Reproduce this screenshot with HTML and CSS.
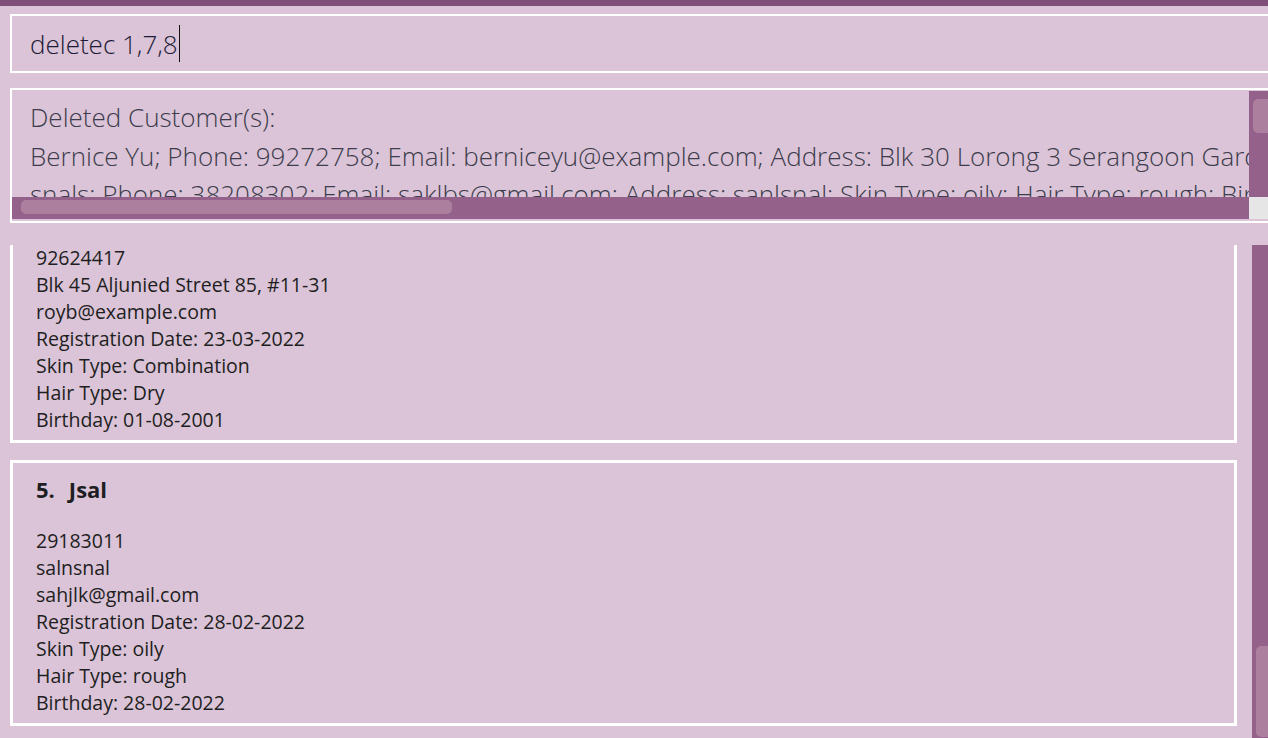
FILE: index.html
```html
<!DOCTYPE html>
<html>
<head>
<meta charset="utf-8">
<link rel="stylesheet" href="styles.css">
</head>
<body>
<div class="app">
  <div class="topbar"></div>
  <div class="command">
    <span class="command-text">deletec 1,7,8</span><span class="caret"></span>
  </div>
  <div class="result">
    <div class="result-text">
      <div class="result-line">Deleted Customer(s):</div>
      <div class="result-line">Bernice Yu; Phone: 99272758; Email: berniceyu@example.com; Address: Blk 30 Lorong 3 Serangoon Gardens, #07-18; Registration Date: 21-03-2022; Skin Type: Dry; Hair Type: Oily; Birthday: 12-06-1999</div>
      <div class="result-line">snals; Phone: 38208302; Email: saklbs@gmail.com; Address: sanlsnal; Skin Type: oily; Hair Type: rough; Birthday: 28-02-2022</div>
    </div>
    <div class="vbar"><div class="vthumb"></div></div>
    <div class="hbar"><div class="hthumb"></div></div>
    <div class="corner"></div>
  </div>
  <div class="list">
    <div class="cards">
      <div class="card first">
        <div class="card-name"><span class="card-index">4.</span><span class="card-title">Roy Balakrishnan</span></div>
        <div class="card-details">
          <div>92624417</div>
          <div>Blk 45 Aljunied Street 85, #11-31</div>
          <div>royb@example.com</div>
          <div>Registration Date: 23-03-2022</div>
          <div>Skin Type: Combination</div>
          <div>Hair Type: Dry</div>
          <div>Birthday: 01-08-2001</div>
        </div>
      </div>
      <div class="card">
        <div class="card-name"><span class="card-index">5.</span><span class="card-title">Jsal</span></div>
        <div class="card-details">
          <div>29183011</div>
          <div>salnsnal</div>
          <div>sahjlk@gmail.com</div>
          <div>Registration Date: 28-02-2022</div>
          <div>Skin Type: oily</div>
          <div>Hair Type: rough</div>
          <div>Birthday: 28-02-2022</div>
        </div>
      </div>
    </div>
    <div class="list-bar"><div class="list-thumb"></div></div>
  </div>
</div>
</body>
</html>
```

FILE: styles.css
```css
html, body {
  margin: 0;
  padding: 0;
}
body {
  background: #dbc4d7;
  font-family: "Open Sans", "Noto Sans", sans-serif;
  overflow: hidden;
  width: 1268px;
  height: 738px;
}
.app {
  display: flex;
  flex-direction: column;
  height: 738px;
}
.topbar {
  height: 6px;
  background: #7f5077;
  flex: none;
}
.command {
  flex: none;
  margin: 8px -2px 0 10px;
  border: 2px solid #ffffff;
  height: 55px;
  display: flex;
  align-items: center;
  padding-left: 18px;
}
.command-text {
  font-size: 26px;
  font-weight: 300;
  color: #1b1b36;
  white-space: pre;
}
.caret {
  width: 1px;
  height: 37px;
  background: #111;
  margin-left: 1px;
}
.result {
  flex: none;
  margin: 15px -2px 0 10px;
  border: 2px solid #ffffff;
  height: 128px;
  padding: 1px 0 2px 0;
  display: grid;
  grid-template-columns: 1fr 19px;
  grid-template-rows: 106px 22px;
}
.result-text {
  overflow: hidden;
  padding: 7px 0 0 18px;
  font-size: 26px;
  font-weight: 300;
  color: #3c3c4c;
  line-height: 38.5px;
}
.result-line {
  white-space: pre;
}
.vbar {
  background: #936189;
  display: flex;
  justify-content: flex-end;
  padding-top: 8px;
}
.vthumb {
  width: 15px;
  height: 34px;
  background: #ad7f9f;
  border-radius: 5px 0 0 5px;
}
.hbar {
  background: #936189;
  display: flex;
  align-items: center;
  padding-left: 9px;
  padding-bottom: 2px;
}
.hthumb {
  width: 431px;
  height: 14px;
  background: #ad7f9f;
  border-radius: 5px;
}
.corner {
  background: #e6e6e6;
}
.list {
  flex: 1;
  min-height: 0;
  margin-top: 22px;
  display: flex;
}
.cards {
  flex: 1;
  min-width: 0;
  overflow: hidden;
  padding: 0 15px 0 10px;
  display: flex;
  flex-direction: column;
  gap: 17px;
}
.card {
  flex: none;
  border: 3px solid #ffffff;
  padding: 10.5px 20px 7.5px 23px;
  color: #1e1e22;
}
.card.first {
  margin-top: -68px;
}
.card-name {
  font-size: 22px;
  font-weight: 700;
  line-height: 30px;
  white-space: pre;
  display: flex;
}
.card-title {
  margin-left: 14px;
}
.card-details {
  margin-top: 23px;
  font-size: 19.5px;
  line-height: 27px;
}
.list-bar {
  width: 16px;
  flex: none;
  background: #936189;
  display: flex;
  flex-direction: column;
  justify-content: flex-end;
  align-items: flex-end;
}
.list-thumb {
  width: 12px;
  height: 91px;
  margin-bottom: 1px;
  background: #ad7f9f;
  border-radius: 5px 0 0 5px;
}
```
